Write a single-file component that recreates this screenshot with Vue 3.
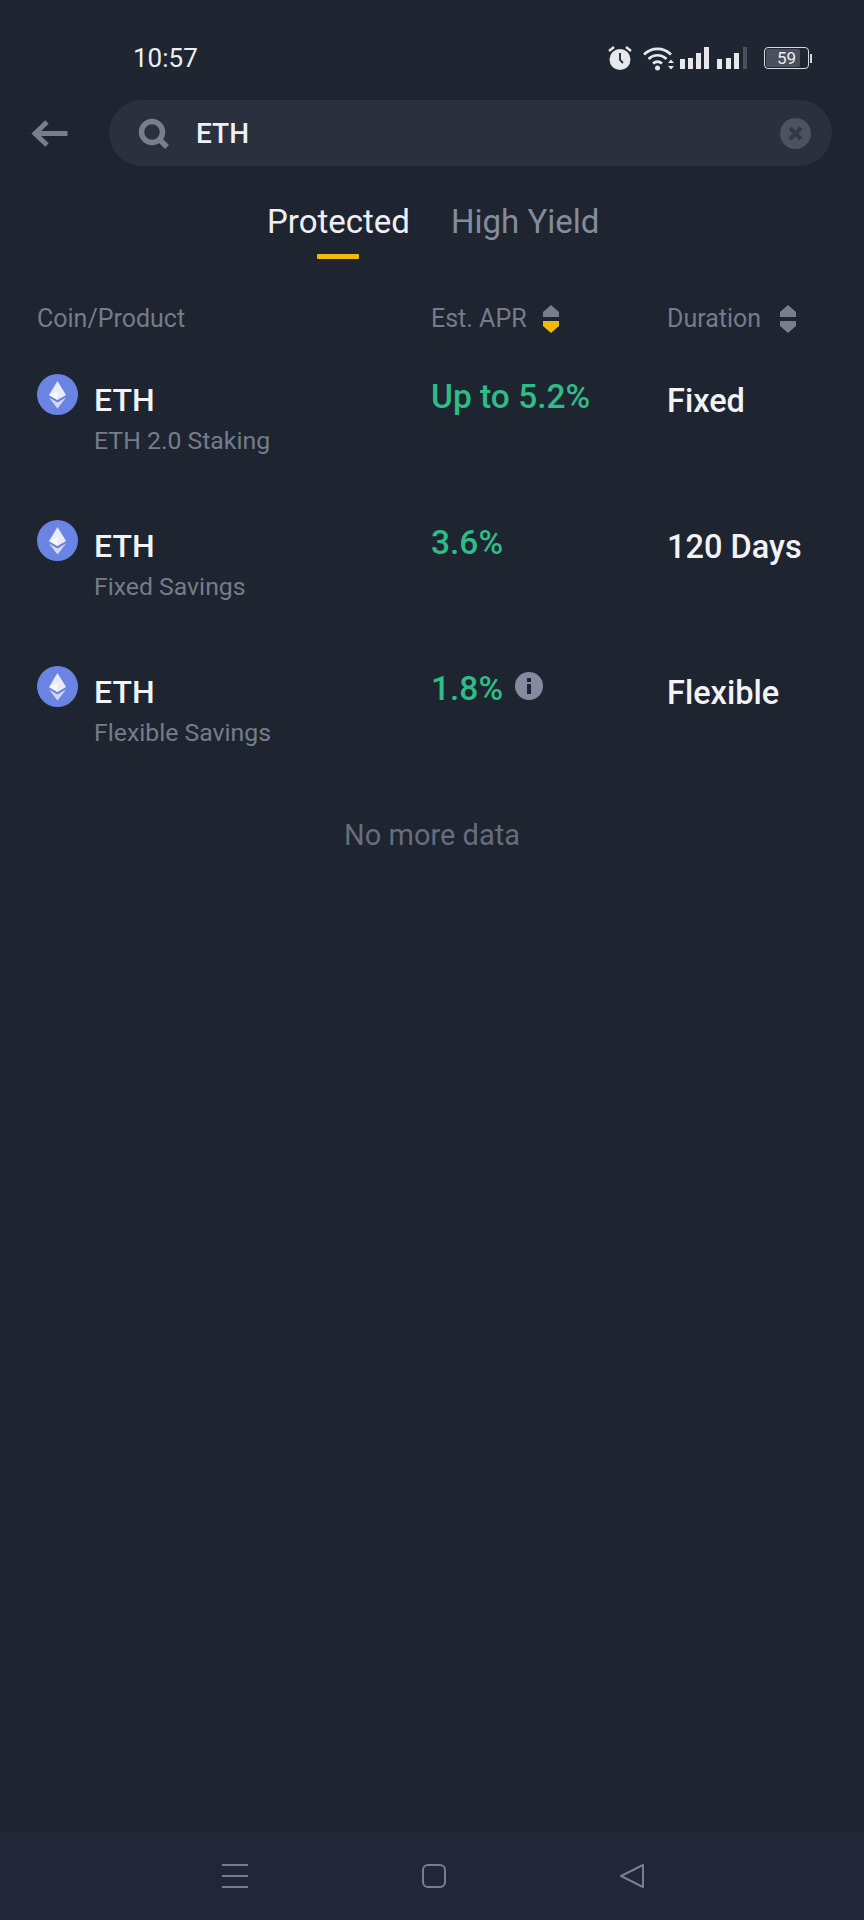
<script setup>
const rows = [
  { name: 'ETH', product: 'ETH 2.0 Staking', apr: 'Up to 5.2%', duration: 'Fixed', info: false },
  { name: 'ETH', product: 'Fixed Savings', apr: '3.6%', duration: '120 Days', info: false },
  { name: 'ETH', product: 'Flexible Savings', apr: '1.8%', duration: 'Flexible', info: true }
]
</script>

<template>
  <div class="screen">
    <div class="status-bar">
      <span class="time">10:57</span>
      <div class="status-icons">
        <svg class="alarm" width="24" height="26" viewBox="0 0 24 26">
          <circle cx="12" cy="14.500" r="10.500" fill="#e6e8ec" />
          <path d="M12 8v7l3 3" fill="none" stroke="#1f2530" stroke-width="1.800" />
          <path d="M1 6l5-4M23 6l-5-4" stroke="#e6e8ec" stroke-width="2.400" fill="none" />
        </svg>
        <svg class="wifi" width="31" height="25" viewBox="0 0 31 25">
          <path d="M1 8.500C9 1 20 1 28 8.500M5.500 13c5.500-5 12.500-5 18 0M10 17.500c3-2.600 6-2.600 9 0" fill="none" stroke="#e6e8ec" stroke-width="2.600" />
          <circle cx="14.500" cy="22" r="2.500" fill="#e6e8ec" />
          <path d="M25 17l3-3.500 3 3.500zM25 20l3 3.500 3-3.500z" fill="#e6e8ec" />
        </svg>
        <svg class="signal" width="29" height="22" viewBox="0 0 29 22">
          <path d="M0 12h5v10H0zM8 11h5v11H8zM16 6h5v16h-5zM24 0h5v22h-5z" fill="#e6e8ec" />
        </svg>
        <svg class="signal" width="30" height="22" viewBox="0 0 30 22">
          <path d="M0 12h5v10H0zM9 11h5v11H9zM17 6h5v16h-5z" fill="#e6e8ec" />
          <path d="M26 0h4v22h-4z" fill="#4a505d" />
        </svg>
        <div class="battery">
          <span class="battery-body"><span class="battery-level"></span><span class="battery-text">59</span></span>
          <span class="battery-tip"></span>
        </div>
      </div>
    </div>

    <div class="search-row">
      <svg class="back" width="37" height="27" viewBox="0 0 37 27">
        <path d="M36.500 13.500H5M16 2L4 13.500 16 25" fill="none" stroke="#777e8c" stroke-width="5" />
      </svg>
      <div class="search-box">
        <svg class="search-icon" width="32" height="31" viewBox="0 0 32 31">
          <circle cx="14" cy="14" r="10.500" fill="none" stroke="#777e8c" stroke-width="5.500" />
          <path d="M21 21l8 8" stroke="#777e8c" stroke-width="5.500" />
        </svg>
        <span class="search-text">ETH</span>
        <svg class="clear" width="31" height="31" viewBox="0 0 31 31">
          <circle cx="15.500" cy="15.500" r="15.500" fill="#4b5362" />
          <path d="M10 10l11 11M21 10L10 21" stroke="#323845" stroke-width="4" />
        </svg>
      </div>
    </div>

    <div class="tabs">
      <div class="tab active">
        Protected
        <span class="tab-line"></span>
      </div>
      <div class="tab">High Yield</div>
    </div>

    <div class="table-head grid">
      <span>Coin/Product</span>
      <span class="sort-label">
        Est. APR
        <svg width="16" height="28" viewBox="0 0 16 28">
          <path d="M8 0l8 7v5H0V7z" fill="#777e8c" />
          <path d="M0 16h16v5l-8 7-8-7z" fill="#f0b90b" />
        </svg>
      </span>
      <span class="sort-label">
        Duration
        <svg width="16" height="28" viewBox="0 0 16 28">
          <path d="M8 0l8 7v5H0V7z" fill="#777e8c" />
          <path d="M0 16h16v5l-8 7-8-7z" fill="#777e8c" />
        </svg>
      </span>
    </div>

    <div v-for="(row, index) in rows" :key="index" class="row grid">
      <div class="coin">
        <svg class="coin-icon" width="41" height="41" viewBox="0 0 41 41">
          <circle cx="20.500" cy="20.500" r="20.500" fill="#6a84e3" />
          <path d="M20.500 7l-8.500 14 8.500 5 8.500-5z" fill="#e9ecf6" />
          <path d="M20.500 17l-8.500 4 8.500 5z" fill="#f8f9fc" />
          <path d="M12 23.500l8.500 11 8.500-11-8.500 5z" fill="#d5daf1" />
        </svg>
        <div class="coin-text">
          <div class="coin-name">{{ row.name }}</div>
          <div class="coin-product">{{ row.product }}</div>
        </div>
      </div>
      <div class="apr">
        {{ row.apr }}
        <svg v-if="row.info" class="info" width="28" height="28" viewBox="0 0 28 28">
          <circle cx="14" cy="14" r="14" fill="#858b9f" />
          <rect x="12" y="12" width="4" height="10" fill="#1f2530" />
          <rect x="12" y="6" width="4" height="4" fill="#1f2530" />
        </svg>
      </div>
      <div class="duration">{{ row.duration }}</div>
    </div>

    <div class="no-more">No more data</div>

    <div class="nav-bar">
      <svg width="28" height="26" viewBox="0 0 28 26">
        <path d="M1 2h26M1 13h26M1 24h26" stroke="#777e8c" stroke-width="2" />
      </svg>
      <svg width="26" height="26" viewBox="0 0 26 26">
        <rect x="2" y="2" width="22" height="22" rx="5" fill="none" stroke="#777e8c" stroke-width="2" />
      </svg>
      <svg width="26" height="26" viewBox="0 0 26 26">
        <path d="M2 13L24 2v22z" fill="none" stroke="#777e8c" stroke-width="2" stroke-linejoin="round" />
      </svg>
    </div>
  </div>
</template>

<style>
html,
body {
  background: #1f2530;
}
</style>

<style scoped>
.screen {
  width: 864px;
  height: 1920px;
  background: #1e2430;
  display: flex;
  flex-direction: column;
  font-family: Roboto, "Noto Sans", sans-serif;
  color: #eaecef;
  overflow: hidden;
}

.status-bar {
  height: 85px;
  background: #1f2631;
  padding: 0 52px 0 133px;
  display: flex;
  justify-content: space-between;
  align-items: flex-start;
  box-sizing: border-box;
}

.time {
  font-size: 26px;
  line-height: 30px;
  margin-top: 43px;
  color: #eef0f3;
}

.status-icons {
  display: flex;
  align-items: center;
  margin-top: 45px;
}

.alarm {
  margin-right: 11px;
}

.wifi {
  margin-right: 6px;
}

.signal {
  margin-right: 8px;
}

.battery {
  display: flex;
  align-items: center;
  margin-left: 9px;
}

.battery-body {
  position: relative;
  width: 43px;
  height: 20px;
  border: 1.500px solid #d5d8de;
  border-radius: 4px;
  display: block;
}

.battery-level {
  position: absolute;
  left: 1px;
  top: 1px;
  bottom: 1px;
  width: 80%;
  background: #4a505d;
  border-radius: 2px;
}

.battery-text {
  position: absolute;
  left: 0;
  right: 0;
  top: 0;
  text-align: center;
  font-size: 17px;
  line-height: 20px;
  color: #eaecef;
}

.battery-tip {
  width: 2px;
  height: 9px;
  background: #d5d8de;
  margin-left: 1px;
}

.search-row {
  display: flex;
  align-items: center;
  padding-left: 31px;
  margin-top: 15px;
}

.back {
  margin-right: 41px;
}

.search-box {
  width: 723px;
  height: 66px;
  border-radius: 33px;
  background: #2a303d;
  display: flex;
  align-items: center;
  padding: 0 21px 0 29px;
  box-sizing: border-box;
}

.search-text {
  font-size: 28px;
  font-weight: 500;
  line-height: 34px;
  margin-top: 2px;
  margin-left: 26px;
  color: #eef0f3;
  flex: 1;
}

.tabs {
  display: flex;
  padding-left: 267px;
  gap: 41px;
  margin-top: 37px;
  font-size: 33px;
  line-height: 38px;
  color: #848c9c;
}

.tab {
  position: relative;
}

.tab.active {
  color: #eef0f3;
}

.tab-line {
  position: absolute;
  left: 50px;
  width: 42px;
  height: 5px;
  top: 51px;
  background: #f0b90b;
  border-radius: 1px;
}

.grid {
  display: grid;
  grid-template-columns: 394px 236px 1fr;
  padding-left: 37px;
}

.table-head {
  margin-top: 63px;
  font-size: 25px;
  line-height: 30px;
  color: #757c8a;
}

.sort-label {
  display: flex;
  align-items: center;
  gap: 16px;
}

.sort-label:last-child {
  gap: 19px;
}

.row {
  height: 146px;
  box-sizing: border-box;
}

.table-head + .row {
  margin-top: 40px;
}

.coin {
  display: flex;
  gap: 16px;
  align-items: flex-start;
}

.coin-name {
  font-size: 32px;
  font-weight: 500;
  line-height: 38px;
  margin-top: 7px;
  color: #f2f3f5;
}

.coin-product {
  font-size: 24.800px;
  line-height: 30px;
  margin-top: 7px;
  color: #757c8a;
}

.apr {
  display: flex;
  align-items: flex-start;
  gap: 12px;
  font-size: 33.500px;
  font-weight: 500;
  line-height: 38px;
  margin-top: 4px;
  color: #2ebd85;
}

.info {
  margin-top: 2px;
}

.duration {
  font-size: 32.500px;
  font-weight: 500;
  line-height: 38px;
  margin-top: 8px;
  color: #f2f3f5;
}

.no-more {
  text-align: center;
  font-size: 29px;
  line-height: 34px;
  color: #666d7c;
  margin-top: 6px;
}

.nav-bar {
  margin-top: auto;
  height: 88px;
  padding-left: 2px;
  background: #212737;
  display: flex;
  box-sizing: border-box;
  align-items: center;
  justify-content: center;
  gap: 172px;
}
</style>
